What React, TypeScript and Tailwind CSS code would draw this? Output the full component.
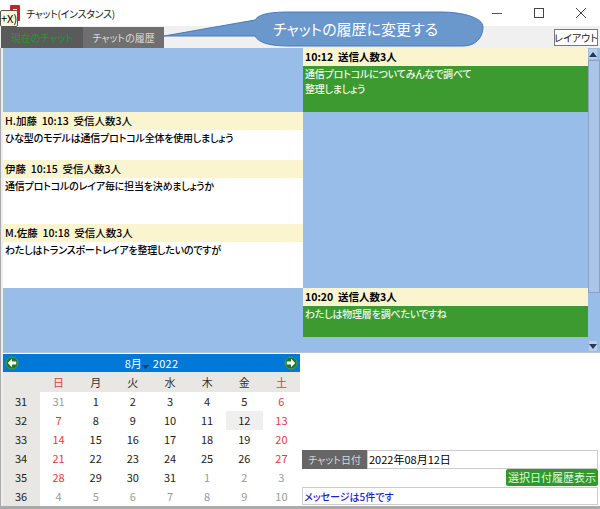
import { ReactNode } from 'react'

const font = "[font-family:'Noto_Sans_CJK_JP','Noto_Sans',sans-serif] [font-feature-settings:'palt']"

const calendar = [
    { week: 31, days: [31, 1, 2, 3, 4, 5, 6] },
    { week: 32, days: [7, 8, 9, 10, 11, 12, 13] },
    { week: 33, days: [14, 15, 16, 17, 18, 19, 20] },
    { week: 34, days: [21, 22, 23, 24, 25, 26, 27] },
    { week: 35, days: [28, 29, 30, 31, 1, 2, 3] },
    { week: 36, days: [4, 5, 6, 7, 8, 9, 10] },
]

const weekdays = ['日', '月', '火', '水', '木', '金', '土']

function Message({
    title,
    lines = [],
    height,
    sent = false,
}: {
    title: string
    lines?: string[]
    height: string
    sent?: boolean
}) {
    return (
        <div>
            <div className={`h-[18px] flex items-center pl-[2px] text-[10.5px] whitespace-pre text-black bg-[#faf5cf] ${sent ? 'font-bold' : 'font-medium'}`}>
                {title}
            </div>
            <div className={`${height} pl-[2px] text-[10px] tracking-[-0.2px] leading-[15px] font-medium ${sent ? 'bg-[#3d9a31] text-[#eef6ea]' : 'bg-white text-black'}`}>
                {lines.map((line) => (
                    <div key={line}>{line}</div>
                ))}
            </div>
        </div>
    )
}

function NavArrow({ dir }: { dir: 'left' | 'right' }) {
    return (
        <svg width="14" height="14" viewBox="0 0 14 14">
            <circle cx="7" cy="7" r="6" fill="#1f7a2c" stroke="#4c9c54" />
            <path
                d={dir === 'left' ? 'M7 2.8 2.8 7 7 11.2V8.6h4.2V5.4H7z' : 'M7 2.8 11.2 7 7 11.2V8.6H2.8V5.4H7z'}
                fill="#fff"
            />
        </svg>
    )
}

function ScrollArrow({ up }: { up?: boolean }) {
    return (
        <div className="h-[12px] mr-[2px] flex items-center justify-center bg-[#b9d0ea] border border-[#a3bcd8]">
            <svg width="8" height="5" viewBox="0 0 8 5">
                <path d={up ? 'M4 0 8 5H0z' : 'M0 0h8L4 5z'} fill="#1f3a63" />
            </svg>
        </div>
    )
}

function WindowButton({ children }: { children: ReactNode }) {
    return <div className="w-[42px] pl-[4px] flex justify-center">{children}</div>
}

function Calendar() {
    return (
        <div className="w-[297px] text-[11px] text-[#222]">
            <div className="h-[18px] flex items-center justify-between px-[2px] bg-[#0078d7] text-white text-[11px]">
                <NavArrow dir="left" />
                <div className="flex items-center">
                    <span>8月</span>
                    <svg width="7" height="4" viewBox="0 0 7 4" className="mt-[8px]">
                        <path d="M0 0h7L3.5 4z" fill="#12406e" />
                    </svg>
                    <span className="ml-[4px] tracking-[0.3px]">2022</span>
                </div>
                <NavArrow dir="right" />
            </div>
            <div className="h-[20px] flex items-center bg-[#e9e7e4]">
                <div className="w-[37px]"></div>
                <div className="flex-1 grid grid-cols-7 text-center">
                    {weekdays.map((day, index) => (
                        <div key={day} className={index === 0 || index === 6 ? 'text-[#e13a45]' : 'text-[#333]'}>
                            {day}
                        </div>
                    ))}
                </div>
            </div>
            {calendar.map((row, rowIndex) => (
                <div key={row.week} className="h-[19px] flex">
                    <div className="w-[37px] pl-[12px] flex items-center bg-[#e9e7e4]">{row.week}</div>
                    <div className="flex-1 grid grid-cols-7 text-center bg-white">
                        {row.days.map((day, index) => {
                            const outside = (rowIndex === 0 && index === 0) || (rowIndex === 4 && index > 3) || rowIndex === 5
                            const color = outside
                                ? 'text-[#9a9a9a]'
                                : index === 0 || index === 6
                                  ? 'text-[#e13a45]'
                                  : 'text-[#222]'
                            return (
                                <div
                                    key={`${row.week}-${index}`}
                                    className={`flex items-center justify-center ${color} ${day === 12 ? 'bg-[#efefef]' : ''}`}
                                >
                                    {day}
                                </div>
                            )
                        })}
                    </div>
                </div>
            ))}
        </div>
    )
}

export default function App() {
    return (
        <div className={`relative w-[600px] h-[509px] overflow-hidden bg-white flex flex-col ${font}`}>
            {/* title bar */}
            <div className="h-[26px] flex items-center bg-white">
                <svg width="10" height="16" viewBox="0 0 10 16" className="ml-[10px]">
                    <rect width="10" height="16" rx="1" fill="#c8202c" />
                    <rect x="3" y="4" width="4" height="5" fill="#fff" />
                </svg>
                <span className="ml-[6px] text-[10px] tracking-[-0.3px] text-[#222]">チャット(インスタンス)</span>
                <div className="ml-auto flex items-center">
                    <WindowButton>
                        <div className="w-[10px] h-[1px] bg-[#555]"></div>
                    </WindowButton>
                    <WindowButton>
                        <div className="w-[10px] h-[10px] border border-[#444]"></div>
                    </WindowButton>
                    <WindowButton>
                        <svg width="10" height="10" viewBox="0 0 10 10">
                            <path d="M0 0 10 10M10 0 0 10" stroke="#444" fill="none" />
                        </svg>
                    </WindowButton>
                </div>
            </div>

            {/* tabs */}
            <div className="h-[22px] flex items-end pl-[1px] bg-[#f0f0f0]">
                <div className="w-[82px] h-[21px] flex items-center justify-center bg-[#5a5a5a] text-[10px] text-[#1f9a2a]">
                    現在のチャット
                </div>
                <div className="w-[81px] h-[21px] flex items-center justify-center bg-[#6f6f6f] text-[10px] text-[#dcdcdc]">
                    チャットの履歴
                </div>
                <div className="ml-auto mr-[2px] mb-[2px] w-[44px] h-[17px] flex items-center justify-center whitespace-nowrap overflow-hidden bg-white border border-[#777] text-[10px] text-[#222]">
                    レイアウト
                </div>
            </div>

            {/* chat log */}
            <div className="h-[305px] flex pl-[2px] bg-[#eeeeee] border-l border-[#aaaaaa]">
                <div className="flex-1 flex bg-[#97bde8] border-b border-[#b9c4d2]">
                    <div className="w-[300px] pt-[64px]">
                        <Message title="H.加藤  10:13  受信人数3人" height="h-[30px]" lines={['ひな型のモデルは通信プロトコル全体を使用しましょう']} />
                        <Message title="伊藤  10:15  受信人数3人" height="h-[46px]" lines={['通信プロトコルのレイア毎に担当を決めましょうか']} />
                        <Message title="M.佐藤  10:18  受信人数3人" height="h-[46px]" lines={['わたしはトランスポートレイアを整理したいのですが']} />
                    </div>
                    <div className="w-[285px] flex flex-col">
                        <Message title="10:12  送信人数3人" height="h-[46px]" lines={['通信プロトコルについてみんなで調べて', '整理しましょう']} sent />
                        <div className="h-[176px]"></div>
                        <Message title="10:20  送信人数3人" height="h-[31px]" lines={['わたしは物理層を調べたいですね']} sent />
                    </div>
                    <div className="w-[12px] flex flex-col">
                        <ScrollArrow up />
                        <div className="h-[233px] bg-[#a9c6ea] border border-[#8aa2bf]"></div>
                        <div className="flex-1"></div>
                        <ScrollArrow />
                    </div>
                </div>
            </div>

            {/* calendar and history controls */}
            <div className="flex-1 flex pl-[2px] bg-[#eeeeee] border-l border-b-[3px] border-[#aaaaaa]">
                <div className="flex-1 flex pt-[1px] bg-white">
                    <Calendar />
                    <div className="flex-1 flex flex-col justify-end pl-[2px] pr-[2px] pb-[1px]">
                        <div className="h-[19px] flex">
                            <div className="w-[65px] flex items-center justify-center bg-[#666] text-[10px] text-[#d8d8d8]">チャット日付</div>
                            <div className="flex-1 pl-[1px] flex items-center bg-white border border-[#ccc] text-[11px] text-black">2022年08月12日</div>
                        </div>
                        <div className="h-[18px] flex justify-end">
                            <div className="w-[92px] h-[17px] flex items-center justify-center rounded-[2px] bg-[#2f9a2a] text-[11px] text-[#e4f2e0]">
                                選択日付履歴表示
                            </div>
                        </div>
                        <div className="h-[18px] pl-[1px] flex items-center bg-white border border-[#ccc] text-[10px] font-medium text-[#1c1ccc]">
                            メッセージは5件です
                        </div>
                    </div>
                </div>
            </div>

            {/* overlays */}
            <div className="absolute left-0 top-[10px] w-[18px] h-[17px] flex items-center bg-[#fdf8dc] border border-[#555] rounded-[2px] text-[11px] text-black">
                +X)
            </div>
            <svg width="330" height="40" viewBox="0 0 330 40" className="absolute left-[160px] top-[10px]">
                <path
                    d="M95 10C99 4 110 2 130 2h150c24 0 43 6 43 15 0 9-6 19-20 19H130c-20 0-31-3-35-10L4 26z"
                    fill="#6a97cc"
                    stroke="#4a7bb5"
                />
            </svg>
            <div className="absolute left-[273px] top-[18px] text-[15px] text-white">チャットの履歴に変更する</div>
        </div>
    )
}
